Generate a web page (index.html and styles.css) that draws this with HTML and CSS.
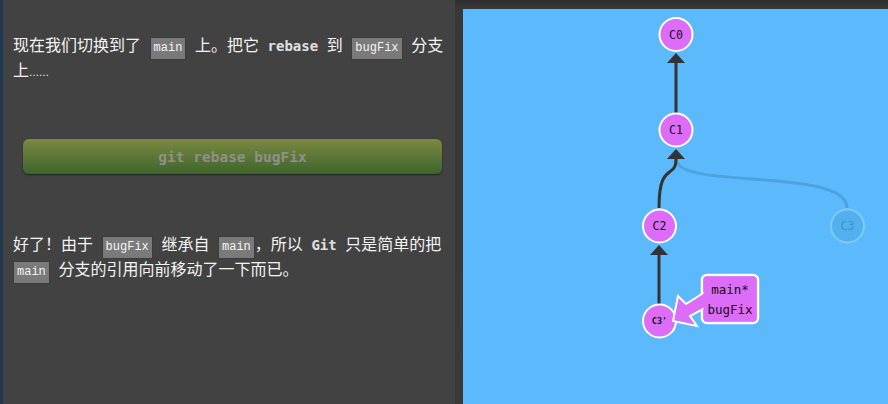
FILE: index.html
```html
<!DOCTYPE html>
<html lang="zh">
<head>
<meta charset="utf-8">
<link rel="stylesheet" href="styles.css">
</head>
<body>
<div class="left">
  <p class="para">现在我们切换到了 <code class="tag">main</code> 上。把它 <b class="kw">rebase</b> 到 <code class="tag">bugFix</code> 分支上<span class="ellipsis">……</span></p>
  <div class="cmd">git rebase bugFix</div>
  <p class="para second">好了！由于 <code class="tag">bugFix</code> 继承自 <code class="tag">main</code>，所以 <b class="kw">Git</b> 只是简单的把 <code class="tag">main</code> 分支的引用向前移动了一下而已。</p>
</div>
<div class="stage">
  <div class="canvas">
    <svg class="graph" width="425" height="395" viewBox="0 0 425 395" xmlns="http://www.w3.org/2000/svg">
      <path class="edge faded" d="M384,199 C384,158 213,181 213,150"/>
      <line class="edge" x1="213" y1="54" x2="213" y2="104"/>
      <path class="edge" d="M196,199 C196,151 213,171 213,150"/>
      <line class="edge" x1="196" y1="246" x2="196" y2="295"/>
      <polygon class="head" points="213,44 204,54 222,54"/>
      <polygon class="head" points="213,140 204,150 222,150"/>
      <polygon class="head" points="196,236 187,246 205,246"/>
      <g class="node"><circle cx="213" cy="25.5" r="16.5"/><text x="213" y="29.5">C0</text></g>
      <g class="node"><circle cx="213" cy="121" r="16.5"/><text x="213" y="125">C1</text></g>
      <g class="node"><circle cx="196.5" cy="217" r="16.5"/><text x="196.5" y="221">C2</text></g>
      <g class="node ghost"><circle cx="384.5" cy="217" r="16.5"/><text x="384.5" y="221">C3</text></g>
      <g class="node"><circle cx="196.5" cy="312" r="16.5"/><text class="small" x="196.5" y="315">C3'</text></g>
      <rect class="label" x="239" y="266" width="56" height="48" rx="5"/>
      <polygon class="label-arrow" points="210,312 215,287 223,295 242,283 242,299 227,307 234,317"/>
      <rect class="label-fill" x="240.5" y="267.5" width="53" height="45" rx="4"/>
      <text class="label-text" x="267" y="284.5">main*</text>
      <text class="label-text" x="267" y="304.5">bugFix</text>
    </svg>
  </div>
</div>
</body>
</html>
```
FILE: styles.css
```css
html, body {
  margin: 0;
  padding: 0;
}
body {
  width: 888px;
  height: 404px;
  overflow: hidden;
  display: flex;
  background: #383838;
}
.left {
  width: 442px;
  flex: none;
  background: #424242;
  border-left: 3px solid #1d3a52;
  padding: 32px 0 0 10px;
  color: #f4f4f4;
}
.para {
  margin: 0;
  font-family: "Noto Sans CJK SC", "Liberation Sans", sans-serif;
  font-size: 16px;
  line-height: 25px;
  word-spacing: 5px;
}
.para.second {
  margin-top: 57px;
}
.ellipsis {
  font-family: "DejaVu Sans", sans-serif;
  font-size: 10px;
  line-height: 1;
}
.tag {
  font-family: "Liberation Mono", monospace;
  font-size: 12px;
  line-height: 1;
  color: #f4f4f4;
  background: #7a7a7a;
  border: 1px solid #3c3c3c;
  padding: 3px 3px 4px;
  word-spacing: 0;
}
.kw {
  font-family: "DejaVu Sans Mono", monospace;
  font-size: 14px;
  line-height: 1;
  font-weight: bold;
  color: #e0e0e0;
}
.cmd {
  margin: 57px 0 0 10px;
  width: 419px;
  height: 35px;
  box-sizing: border-box;
  border-radius: 6px;
  background: linear-gradient(#7c8940, #3e642d);
  box-shadow: 0 1px 2px rgba(0, 0, 0, 0.5);
  display: flex;
  align-items: center;
  justify-content: center;
  font-family: "DejaVu Sans Mono", monospace;
  font-size: 14.5px;
  font-weight: bold;
  color: #8f9088;
}
.stage {
  flex: 1;
  padding: 9px 0 0 8px;
  background: linear-gradient(#2f2f2f 0, #383838 9px, #393939 100%);
}
.canvas {
  width: 425px;
  height: 395px;
  background: #5cbafc;
}
.graph {
  display: block;
}
.edge {
  fill: none;
  stroke: #333333;
  stroke-width: 3;
}
.edge.faded {
  stroke: #3f90c9;
  stroke-opacity: 0.55;
}
.head {
  fill: #333333;
}
.node circle {
  fill: #dd6cf9;
  stroke: #ffffff;
  stroke-width: 2;
}
.node text {
  font-family: "DejaVu Sans Mono", monospace;
  font-size: 11.5px;
  text-anchor: middle;
  fill: #111111;
}
.node text.small {
  font-size: 8.5px;
  font-weight: bold;
}
.node.ghost circle {
  fill: #52b0ef;
  stroke: #7fcbff;
}
.node.ghost text {
  fill: #3e92cc;
}
.label {
  fill: #dd6cf9;
  stroke: #ffffff;
  stroke-width: 2.5;
}
.label-arrow {
  fill: #dd6cf9;
  stroke: #ffffff;
  stroke-width: 2;
  stroke-linejoin: miter;
}
.label-fill {
  fill: #dd6cf9;
}
.label-text {
  font-family: "DejaVu Sans Mono", monospace;
  font-size: 12.5px;
  text-anchor: middle;
  fill: #111111;
}
```
